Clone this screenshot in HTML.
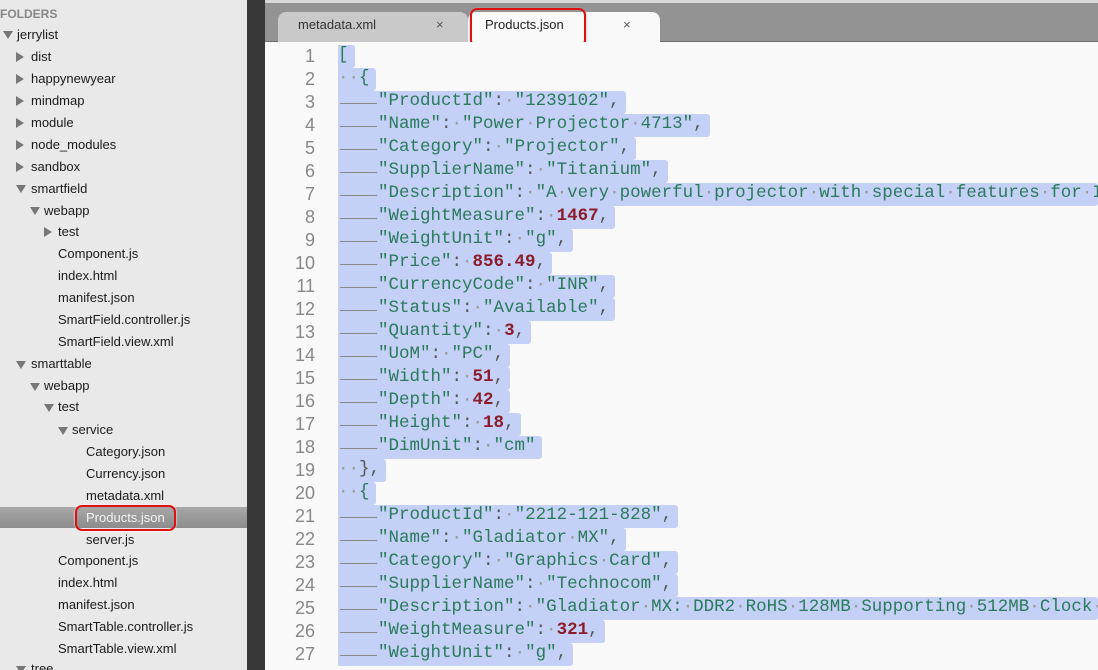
<!DOCTYPE html>
<html><head><meta charset="utf-8"><style>
*{margin:0;padding:0;box-sizing:border-box}
html,body{width:1098px;height:670px;overflow:hidden}
body{background:#f9f9f9;position:relative;font-family:"Liberation Sans",sans-serif}
i,b{font-style:normal}
#side{position:absolute;left:0;top:0;width:247px;height:670px;background:#e9e9e9;overflow:hidden}
.r{position:absolute;height:22px;line-height:22px;font-size:13px;color:#1a1a1a;white-space:nowrap}
.hd{color:#888;font-weight:bold;font-size:12px}
.ar{position:absolute;width:0;height:0}
.dn{border-left:5px solid transparent;border-right:5px solid transparent;border-top:8px solid #777}
.rt{border-top:5px solid transparent;border-bottom:5px solid transparent;border-left:8px solid #777}
#sel{position:absolute;left:0;top:507px;width:247px;height:21px;background:linear-gradient(#a8a8a8,#8c8c8c)}
#sb{position:absolute;left:247px;top:0;width:18px;height:670px;background:#373737}
#th{position:absolute;left:251px;top:6px;width:10px;height:366px;background:#555;border-radius:5px}
#bar{position:absolute;left:265px;top:0;width:833px;height:42px;background:#939393;border-top:3px solid #d8d8d8;border-bottom:1px solid #6d6d6d}
.tab{position:absolute;top:12px;height:30px;font-size:13px;line-height:26px;border-radius:8px 8px 0 0}
#ed{position:absolute;left:265px;top:42px;width:833px;height:628px;background:#f9f9f9}
.ln{position:absolute;left:265px;width:50px;text-align:right;font:18px "Liberation Sans",sans-serif;color:#888;height:23px;line-height:23px}
.cl{position:absolute;left:338px;height:23px;line-height:24px;font:17.5px "Liberation Mono",monospace;color:#2a7a5c;white-space:pre}
.cl>span{background:#c4d0f6;padding-right:6px;display:inline-block;border-radius:0 3px 3px 0;height:23px}
.t{display:inline-block;width:40px;height:23px;vertical-align:top;position:relative}
.t:after{content:"";position:absolute;left:2px;right:1px;top:12px;height:1px;background:#888}
.d{color:#999}
.p{color:#555}
.n{color:#8b1c2a;font-weight:bold}
</style></head><body>
<div id="side">
<div class="r hd" style="left:0;top:3px">FOLDERS</div>
<div id="sel"></div>
<div class="ar dn" style="left:3px;top:31px"></div><div class="r" style="left:17px;top:24px">jerrylist</div>
<div class="ar rt" style="left:16px;top:52px"></div><div class="r" style="left:31px;top:46px">dist</div>
<div class="ar rt" style="left:16px;top:74px"></div><div class="r" style="left:31px;top:68px">happynewyear</div>
<div class="ar rt" style="left:16px;top:96px"></div><div class="r" style="left:31px;top:90px">mindmap</div>
<div class="ar rt" style="left:16px;top:118px"></div><div class="r" style="left:31px;top:112px">module</div>
<div class="ar rt" style="left:16px;top:140px"></div><div class="r" style="left:31px;top:134px">node_modules</div>
<div class="ar rt" style="left:16px;top:162px"></div><div class="r" style="left:31px;top:156px">sandbox</div>
<div class="ar dn" style="left:16px;top:185px"></div><div class="r" style="left:31px;top:178px">smartfield</div>
<div class="ar dn" style="left:30px;top:207px"></div><div class="r" style="left:44px;top:200px">webapp</div>
<div class="ar rt" style="left:44px;top:227px"></div><div class="r" style="left:58px;top:221px">test</div>
<div class="r" style="left:58px;top:243px">Component.js</div>
<div class="r" style="left:58px;top:265px">index.html</div>
<div class="r" style="left:58px;top:287px">manifest.json</div>
<div class="r" style="left:58px;top:309px">SmartField.controller.js</div>
<div class="r" style="left:58px;top:331px">SmartField.view.xml</div>
<div class="ar dn" style="left:16px;top:361px"></div><div class="r" style="left:31px;top:353px">smarttable</div>
<div class="ar dn" style="left:30px;top:383px"></div><div class="r" style="left:44px;top:375px">webapp</div>
<div class="ar dn" style="left:44px;top:404px"></div><div class="r" style="left:58px;top:396px">test</div>
<div class="ar dn" style="left:58px;top:427px"></div><div class="r" style="left:72px;top:419px">service</div>
<div class="r" style="left:86px;top:441px">Category.json</div>
<div class="r" style="left:86px;top:463px">Currency.json</div>
<div class="r" style="left:86px;top:485px">metadata.xml</div>
<div style="position:absolute;left:75px;top:505px;width:101px;height:26px;border:2px solid #d11;border-radius:7px;box-shadow:0 0 2px #fff"></div>
<div class="r" style="left:86px;top:507px;color:#f4f4f4">Products.json</div>
<div class="r" style="left:86px;top:529px">server.js</div>
<div class="r" style="left:58px;top:550px">Component.js</div>
<div class="r" style="left:58px;top:572px">index.html</div>
<div class="r" style="left:58px;top:594px">manifest.json</div>
<div class="r" style="left:58px;top:616px">SmartTable.controller.js</div>
<div class="r" style="left:58px;top:638px">SmartTable.view.xml</div>
<div class="ar dn" style="left:16px;top:666px"></div><div class="r" style="left:31px;top:658px">tree</div>
</div>
<div id="sb"><div id="th"></div></div>
<div id="bar"></div>
<div class="tab" style="left:278px;width:190px;background:#c9c9c9;padding-left:20px;color:#333">metadata.xml<span style="position:absolute;left:158px;color:#555">×</span></div>
<div class="tab" style="left:468px;width:192px;background:#f9f9f9;padding-left:17px;color:#222">Products.json<span style="position:absolute;left:155px;color:#555">×</span></div>
<div style="position:absolute;left:470px;top:8px;width:116px;height:39px;border:2px solid #d11;border-radius:7px;box-shadow:0 0 2px #aaa"></div>
<div id="ed"></div>

<div class="ln" style="top:45px">1</div><div class="cl" style="top:45px"><span>[</span></div>
<div class="ln" style="top:68px">2</div><div class="cl" style="top:68px"><span><i class="d">··</i>{</span></div>
<div class="ln" style="top:91px">3</div><div class="cl" style="top:91px"><span><i class="t"></i>"ProductId"<i class="p">:</i><i class="d">·</i>"1239102"<i class="p">,</i></span></div>
<div class="ln" style="top:114px">4</div><div class="cl" style="top:114px"><span><i class="t"></i>"Name"<i class="p">:</i><i class="d">·</i>"Power<i class="d">·</i>Projector<i class="d">·</i>4713"<i class="p">,</i></span></div>
<div class="ln" style="top:137px">5</div><div class="cl" style="top:137px"><span><i class="t"></i>"Category"<i class="p">:</i><i class="d">·</i>"Projector"<i class="p">,</i></span></div>
<div class="ln" style="top:160px">6</div><div class="cl" style="top:160px"><span><i class="t"></i>"SupplierName"<i class="p">:</i><i class="d">·</i>"Titanium"<i class="p">,</i></span></div>
<div class="ln" style="top:183px">7</div><div class="cl" style="top:183px"><span style="width:760px"><i class="t"></i>"Description"<i class="p">:</i><i class="d">·</i>"A<i class="d">·</i>very<i class="d">·</i>powerful<i class="d">·</i>projector<i class="d">·</i>with<i class="d">·</i>special<i class="d">·</i>features<i class="d">·</i>for<i class="d">·</i>In</span></div>
<div class="ln" style="top:206px">8</div><div class="cl" style="top:206px"><span><i class="t"></i>"WeightMeasure"<i class="p">:</i><i class="d">·</i><b class="n">1467</b><i class="p">,</i></span></div>
<div class="ln" style="top:229px">9</div><div class="cl" style="top:229px"><span><i class="t"></i>"WeightUnit"<i class="p">:</i><i class="d">·</i>"g"<i class="p">,</i></span></div>
<div class="ln" style="top:252px">10</div><div class="cl" style="top:252px"><span><i class="t"></i>"Price"<i class="p">:</i><i class="d">·</i><b class="n">856.49</b><i class="p">,</i></span></div>
<div class="ln" style="top:275px">11</div><div class="cl" style="top:275px"><span><i class="t"></i>"CurrencyCode"<i class="p">:</i><i class="d">·</i>"INR"<i class="p">,</i></span></div>
<div class="ln" style="top:298px">12</div><div class="cl" style="top:298px"><span><i class="t"></i>"Status"<i class="p">:</i><i class="d">·</i>"Available"<i class="p">,</i></span></div>
<div class="ln" style="top:321px">13</div><div class="cl" style="top:321px"><span><i class="t"></i>"Quantity"<i class="p">:</i><i class="d">·</i><b class="n">3</b><i class="p">,</i></span></div>
<div class="ln" style="top:344px">14</div><div class="cl" style="top:344px"><span><i class="t"></i>"UoM"<i class="p">:</i><i class="d">·</i>"PC"<i class="p">,</i></span></div>
<div class="ln" style="top:367px">15</div><div class="cl" style="top:367px"><span><i class="t"></i>"Width"<i class="p">:</i><i class="d">·</i><b class="n">51</b><i class="p">,</i></span></div>
<div class="ln" style="top:390px">16</div><div class="cl" style="top:390px"><span><i class="t"></i>"Depth"<i class="p">:</i><i class="d">·</i><b class="n">42</b><i class="p">,</i></span></div>
<div class="ln" style="top:413px">17</div><div class="cl" style="top:413px"><span><i class="t"></i>"Height"<i class="p">:</i><i class="d">·</i><b class="n">18</b><i class="p">,</i></span></div>
<div class="ln" style="top:436px">18</div><div class="cl" style="top:436px"><span><i class="t"></i>"DimUnit"<i class="p">:</i><i class="d">·</i>"cm"</span></div>
<div class="ln" style="top:459px">19</div><div class="cl" style="top:459px"><span><i class="d">··</i><i class="p">},</i></span></div>
<div class="ln" style="top:482px">20</div><div class="cl" style="top:482px"><span><i class="d">··</i>{</span></div>
<div class="ln" style="top:505px">21</div><div class="cl" style="top:505px"><span><i class="t"></i>"ProductId"<i class="p">:</i><i class="d">·</i>"2212-121-828"<i class="p">,</i></span></div>
<div class="ln" style="top:528px">22</div><div class="cl" style="top:528px"><span><i class="t"></i>"Name"<i class="p">:</i><i class="d">·</i>"Gladiator<i class="d">·</i>MX"<i class="p">,</i></span></div>
<div class="ln" style="top:551px">23</div><div class="cl" style="top:551px"><span><i class="t"></i>"Category"<i class="p">:</i><i class="d">·</i>"Graphics<i class="d">·</i>Card"<i class="p">,</i></span></div>
<div class="ln" style="top:574px">24</div><div class="cl" style="top:574px"><span><i class="t"></i>"SupplierName"<i class="p">:</i><i class="d">·</i>"Technocom"<i class="p">,</i></span></div>
<div class="ln" style="top:597px">25</div><div class="cl" style="top:597px"><span style="width:760px"><i class="t"></i>"Description"<i class="p">:</i><i class="d">·</i>"Gladiator<i class="d">·</i>MX:<i class="d">·</i>DDR2<i class="d">·</i>RoHS<i class="d">·</i>128MB<i class="d">·</i>Supporting<i class="d">·</i>512MB<i class="d">·</i>Clock<i class="d">·</i>r</span></div>
<div class="ln" style="top:620px">26</div><div class="cl" style="top:620px"><span><i class="t"></i>"WeightMeasure"<i class="p">:</i><i class="d">·</i><b class="n">321</b><i class="p">,</i></span></div>
<div class="ln" style="top:643px">27</div><div class="cl" style="top:643px"><span><i class="t"></i>"WeightUnit"<i class="p">:</i><i class="d">·</i>"g"<i class="p">,</i></span></div>
</body></html>
